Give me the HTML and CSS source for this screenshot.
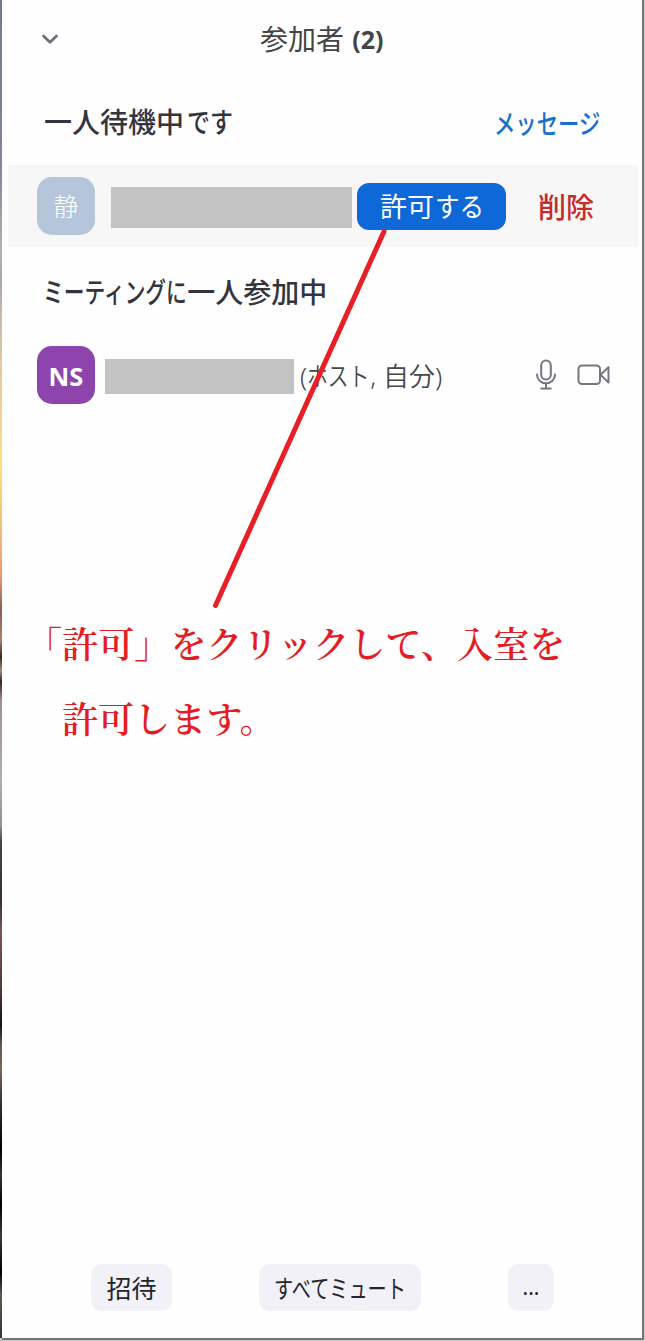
FILE: index.html
```html
<!DOCTYPE html>
<html lang="ja">
<head>
<meta charset="utf-8">
<title>参加者</title>
<link rel="stylesheet" href="styles.css">
</head>
<body>
<div class="window">
  <div class="backdrop"></div>
  <main class="panel">
    <header class="header">
      <svg class="chevron" width="18" height="12" viewBox="0 0 18 12"><path d="M2.500 3 9 9.200l6.500-6.200"/></svg>
      <h1 class="title">参加者 <b>(2)</b></h1>
    </header>
    <section class="heading waiting-heading">
      <h2>一人待機中<span class="kana kana-desu">です</span></h2>
      <a class="message"><span class="kana kana-message">メッセージ</span></a>
    </section>
    <div class="row waiting-row">
      <div class="avatar avatar-blue">静</div>
      <div class="mask mask-guest"></div>
      <button class="admit">許可<span class="kana kana-suru">する</span></button>
      <a class="remove">削除</a>
    </div>
    <section class="heading joined-heading">
      <h2><span class="kana kana-meeting">ミーティングに</span>一人参加中</h2>
    </section>
    <div class="row host-row">
      <div class="avatar avatar-purple">NS</div>
      <div class="mask mask-host"></div>
      <div class="role">(<span class="kana kana-host">ホスト</span>, 自分)</div>
      <svg class="mic" width="22" height="32" viewBox="0 0 22 32"><rect x="6.200" y="1.500" width="9.600" height="19" rx="4.800"/><path d="M2 15.500c0 5 4 8.700 9 8.700s9-3.700 9-8.700M11 24.200v5M6.200 29.400h9.600"/></svg>
      <svg class="camera" width="34" height="22" viewBox="0 0 34 22"><rect x="1.500" y="1.500" width="21.500" height="18.500" rx="3.500"/><path d="M23.500 10.700 31.500 3.200v15.400z"/></svg>
    </div>
    <p class="note">「許可」をクリックして、入室を<br><span class="indent">許可します。</span></p>
    <footer class="footer">
      <button class="action invite">招待</button>
      <button class="action mute"><span class="kana kana-mute">すべてミュート</span></button>
      <button class="action more">...</button>
    </footer>
  </main>
  <svg class="pointer" width="645" height="1341" viewBox="0 0 645 1341"><path d="M384 231.500 215.500 605.500"/></svg>
</div>
</body>
</html>
```
FILE: styles.css
```css
* { box-sizing: border-box; }
body {
  margin: 0;
  background: #c8c8c8;
  color: #34343f;
  font-family: "Noto Sans", "Noto Sans CJK JP", sans-serif;
}
h1, h2, p { margin: 0; font-weight: 400; }
button { border: 0; padding: 0; font-family: inherit; }
svg { fill: none; flex: none; }
.window {
  position: relative;
  display: flex;
  width: 645px;
  height: 1341px;
  padding: 0 1px 1px 0;
  overflow: hidden;
}
.backdrop {
  width: 2px;
  height: 1338px;
  background: linear-gradient(#737b8c 0, #818798 165px, #9b9ca5 210px, #b8b1ad 250px, #aaa6a7 280px, #c8b9ab 315px, #e4c9a0 365px, #f5d492 430px, #ffe07e 465px, #efc57b 520px, #f09a70 575px, #895f55 610px, #a98571 640px, #3d2224 657px, #a38b80 670px, #3d2224 682px, #9c928d 700px, #b4acab 780px, #96908d 825px, #4b4142 842px, #372f31 900px, #785859 932px, #573b37 985px, #151312 1025px, #625952 1045px, #80625e 1070px, #34372f 1100px, #000 1150px, #35382f 1175px, #000 1205px, #3c3b34 1235px, #000 1272px, #61594f 1295px, #35352f 1338px);
}
.panel {
  display: flex;
  flex-direction: column;
  flex: 1;
  background: #fefefe;
  border-right: 2px solid #747474;
  border-bottom: 2px solid #747474;
}
.kana { display: inline-block; transform-origin: left center; white-space: nowrap; }
.header {
  display: grid;
  grid-template-columns: 219px auto;
  align-items: center;
  height: 78px;
  padding-left: 39px;
}
.chevron { stroke: #6e6e7c; stroke-width: 2.800; stroke-linecap: round; stroke-linejoin: round; }
.title { color: #444; font-size: 28px; line-height: 40px; white-space: nowrap; }
.title b { position: relative; top: -1px; font-size: 25px; margin-left: 1px; }
.heading { display: flex; align-items: center; justify-content: space-between; }
.heading h2 { font-size: 28px; font-weight: 500; line-height: 40px; white-space: nowrap; }
.waiting-heading { height: 87px; padding: 0 42px 0 42px; }
.kana-desu { transform: scaleX(.82); margin: 0 -9px 0 3px; }
.message { width: 106px; color: #1670cf; font-size: 27px; font-weight: 500; line-height: 40px; padding-top: 4px; }
.kana-message { transform: scaleX(.79); }
.row { display: flex; align-items: center; }
.waiting-row { height: 82px; margin: 0 4px 0 6px; padding-left: 29px; background: #f7f7f7; }
.avatar {
  display: flex;
  align-items: center;
  justify-content: center;
  flex: none;
  width: 58px;
  height: 58px;
  border-radius: 15px;
  color: #fff;
}
.avatar-blue { background: #b6c6da; font-size: 25px; font-weight: 300; padding-bottom: 2px; }
.avatar-purple { background: #8e44ad; font-size: 25.500px; font-weight: 700; padding-top: 2px; }
.mask { flex: none; background: #c3c3c3; }
.mask-guest { width: 241px; height: 41px; margin: 2px 5px 0 16px; }
.admit {
  flex: none;
  width: 149px;
  height: 47px;
  padding: 0 0 1px 23px;
  border-radius: 12px;
  background: #0e68d8;
  color: #fff;
  font-size: 27px;
  text-align: left;
  white-space: nowrap;
}
.kana-suru { transform: scaleX(.91); margin: 0 -6px 0 1px; }
.remove { margin-left: 32px; color: #c52b2b; font-size: 28px; font-weight: 500; white-space: nowrap; }
.joined-heading { height: 90px; padding-left: 41px; }
.kana-meeting { transform: scaleX(.74); margin-right: -50px; }
.host-row { height: 76px; padding-left: 35px; }
.mask-host { width: 189px; height: 35px; margin: 3px 6px 0 10px; }
.role { width: 235px; padding-bottom: 1px; color: #484848; font-size: 26px; font-weight: 350; white-space: nowrap; }
.kana-host { transform: scaleX(.8); margin-right: -15px; }
.mic, .camera { stroke: #777680; stroke-width: 2; stroke-linecap: round; stroke-linejoin: round; }
.camera { margin-left: 20px; }
.note {
  margin-top: 192px;
  padding-left: 24px;
  color: #e51c23;
  font-family: "Noto Serif CJK JP", "Noto Sans CJK JP", serif;
  font-size: 36px;
  font-weight: 600;
  letter-spacing: .1px;
  line-height: 75px;
  white-space: nowrap;
}
.indent { padding-left: 36px; }
.footer { display: flex; margin-top: auto; padding: 0 0 27px 89px; }
.action {
  height: 47px;
  padding-bottom: 2px;
  border-radius: 11px;
  background: #f2f1f8;
  color: #24242e;
  font-size: 25px;
  white-space: nowrap;
}
.invite { width: 81px; margin-right: 87px; }
.mute { width: 162px; margin-right: 87px; padding-left: 15px; text-align: left; }
.kana-mute { transform: scaleX(.765); }
.more { width: 46px; font-size: 21px; }
.pointer { position: absolute; left: 0; top: 0; stroke: #e91f27; stroke-width: 5; stroke-linecap: round; }
```
